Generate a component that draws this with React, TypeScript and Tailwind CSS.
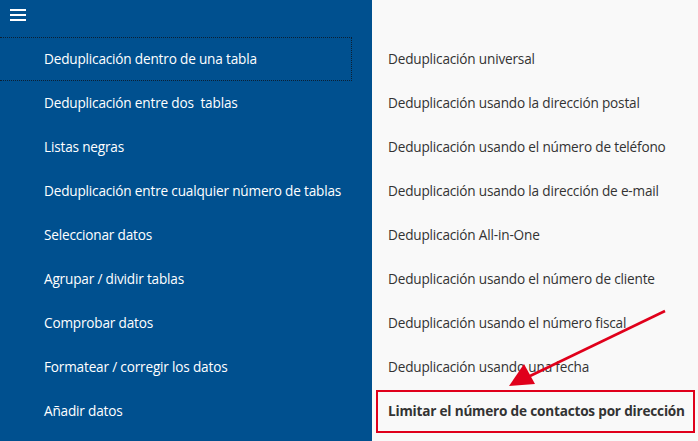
import React from "react";

const left = [
  "Deduplicación dentro de una tabla",
  "Deduplicación entre dos  tablas",
  "Listas negras",
  "Deduplicación entre cualquier número de tablas",
  "Seleccionar datos",
  "Agrupar / dividir tablas",
  "Comprobar datos",
  "Formatear / corregir los datos",
  "Añadir datos",
];

const right = [
  "Deduplicación universal",
  "Deduplicación usando la dirección postal",
  "Deduplicación usando el número de teléfono",
  "Deduplicación usando la dirección de e-mail",
  "Deduplicación All-in-One",
  "Deduplicación usando el número de cliente",
  "Deduplicación usando el número fiscal",
  "Deduplicación usando una fecha",
];

export default function App() {
  return (
    <div
      className="relative flex w-[698px] h-[441px] overflow-hidden text-[13.6px]"
      style={{ fontFamily: '"Open Sans", "Noto Sans", sans-serif' }}
    >
      <div className="w-[372px] bg-[#00508f] text-white flex flex-col">
        <div className="h-[37px] pl-[10px] pt-[9px]">
          <div className="flex flex-col gap-[3px] w-[16px]">
            <div className="h-[2px] bg-white" />
            <div className="h-[2px] bg-white" />
            <div className="h-[2px] bg-white" />
          </div>
        </div>
        {left.map((t, i) => (
          <div
            key={i}
            className={
              "h-[44px] flex items-center pl-[44px] whitespace-pre tracking-[-0.18px] " +
              (i === 0
                ? "w-[352px] border border-dotted border-[#0b1f33] border-l-0"
                : "")
            }
          >
            {t}
          </div>
        ))}
      </div>
      <div className="flex-1 bg-[#f9f9f9] text-[#333333] flex flex-col pt-[37px]">
        {right.map((t, i) => (
          <div key={i} className="h-[44px] flex items-center pl-[16px] tracking-[-0.18px] whitespace-nowrap">
            {t}
          </div>
        ))}
        <div className="mt-[1px] h-[43px] ml-[4px] mr-[3px] border-2 border-[#e0001b] flex items-center pl-[10px] font-bold tracking-[-0.2px] whitespace-nowrap">
          Limitar el número de contactos por dirección
        </div>
      </div>
      <svg
        className="absolute left-0 top-0 pointer-events-none"
        width="698"
        height="441"
      >
        <line x1="665" y1="311" x2="530" y2="376" stroke="#e0001b" strokeWidth="2.5" />
        <polygon points="509,386 524,364 535,384" fill="#e0001b" />
      </svg>
    </div>
  );
}
